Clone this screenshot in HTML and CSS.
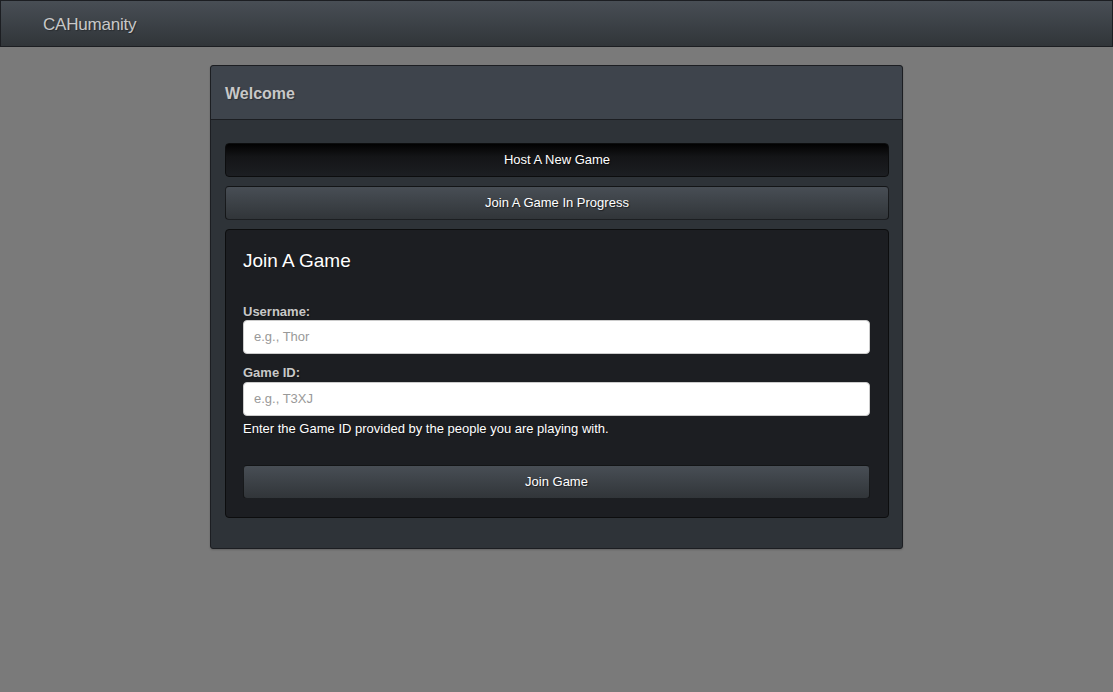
FILE: index.html
```html
<!DOCTYPE html>
<html>
<head>
<meta charset="utf-8">
<title>CAHumanity</title>
<link rel="stylesheet" href="styles.css">
</head>
<body>
<nav class="navbar">
  <a class="brand" href="#">CAHumanity</a>
</nav>
<main class="container">
  <section class="panel">
    <header class="panel-heading">Welcome</header>
    <div class="panel-body">
      <button class="btn btn-dark">Host A New Game</button>
      <button class="btn btn-default">Join A Game In Progress</button>
      <div class="well">
        <h3 class="well-title">Join A Game</h3>
        <label class="field-label" for="username">Username:</label>
        <input class="field-input" id="username" type="text" placeholder="e.g., Thor">
        <label class="field-label field-label-second" for="gameid">Game ID:</label>
        <input class="field-input" id="gameid" type="text" placeholder="e.g., T3XJ">
        <p class="help">Enter the Game ID provided by the people you are playing with.</p>
        <button class="btn btn-default btn-join">Join Game</button>
      </div>
    </div>
  </section>
</main>
</body>
</html>
```

FILE: styles.css
```css
* { box-sizing: border-box; }
html, body { margin: 0; padding: 0; }
body {
  background: #7a7a7a;
  font-family: "Liberation Sans", Arial, sans-serif;
  font-size: 13px;
  color: #c8c8c8;
  height: 692px;
}
.navbar {
  height: 47px;
  border: 1px solid #1c1e22;
  background: linear-gradient(#484e55, #3a3f44 60%, #313539);
  display: flex;
  align-items: center;
  padding-left: 42px;
}
.brand {
  color: #c8c8c8;
  font-size: 17px;
  letter-spacing: -0.2px;
  text-decoration: none;
  text-shadow: 1px 1px 1px rgba(0,0,0,0.3);
  margin-top: 3px;
}
.container {
  display: flex;
  justify-content: center;
  padding-top: 18px;
}
.panel {
  width: 693px;
  border: 1px solid #1c1e22;
  border-radius: 3px;
  background: #2e3338;
  box-shadow: 0 1px 2px rgba(0,0,0,0.2);
}
.panel-heading {
  height: 54px;
  background: #3e444c;
  border-bottom: 1px solid #1c1e22;
  border-radius: 3px 3px 0 0;
  padding: 2px 14px 0;
  display: flex;
  align-items: center;
  font-size: 16px;
  font-weight: bold;
  color: #c8c8c8;
  text-shadow: 1px 1px 1px rgba(0,0,0,0.3);
}
.panel-body {
  padding: 23px 13px 30px 14px;
  display: flex;
  flex-direction: column;
}
.btn {
  display: block;
  width: 100%;
  height: 34px;
  border-radius: 4px;
  font-family: "Liberation Sans", Arial, sans-serif;
  font-size: 13px;
  color: #fff;
  text-shadow: 1px 1px 1px rgba(0,0,0,0.5);
  cursor: pointer;
  padding: 0 0 2px;
}
.btn-dark {
  background: linear-gradient(#020202, #141517 40%, #1c1e22);
  border: 1px solid #0c0d0e;
}
.btn-default {
  background: linear-gradient(#484e55, #3a3f44 60%, #313539);
  border: 1px solid rgba(0,0,0,0.6);
}
.btn + .btn { margin-top: 9px; }
.well {
  margin-top: 9px;
  background: #1c1e22;
  border: 1px solid #0c0d0e;
  border-radius: 4px;
  padding: 20px 18px 18px 17px;
  display: flex;
  flex-direction: column;
}
.well-title {
  margin: 0;
  font-size: 19px;
  font-weight: normal;
  line-height: 22px;
  color: #fff;
  text-shadow: 1px 1px 1px rgba(0,0,0,0.3);
}
.field-label {
  margin-top: 32px;
  margin-bottom: 0;
  font-weight: bold;
  line-height: 16px;
  color: #c8c8c8;
  text-shadow: 1px 1px 1px rgba(0,0,0,0.3);
}
.field-label-second {
  margin-top: 11px;
  margin-bottom: 1px;
}
.field-input {
  height: 34px;
  width: 100%;
  border: 1px solid #ccc;
  border-radius: 4px;
  background: #fff;
  padding: 0 10px 2px;
  font-family: "Liberation Sans", Arial, sans-serif;
  font-size: 13px;
  color: #333;
}
.field-input::placeholder { color: #999; }
.help {
  margin: 5px 0 0;
  line-height: 16px;
  color: #fff;
  text-shadow: 1px 1px 1px rgba(0,0,0,0.3);
}
.btn-join {
  margin-top: 28px;
}
```
